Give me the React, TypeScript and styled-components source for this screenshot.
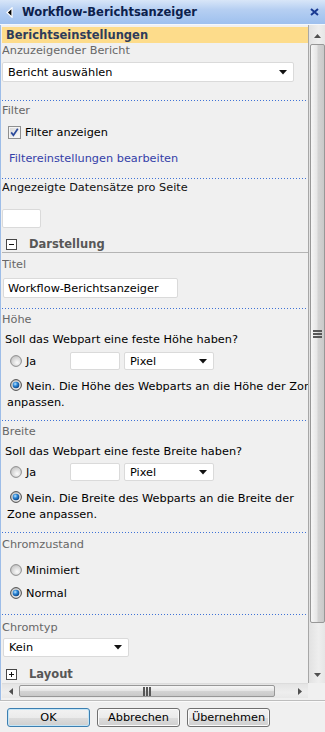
import React from 'react';
import styled, { createGlobalStyle } from 'styled-components';

const GlobalStyle = createGlobalStyle`
  html, body {
    margin: 0;
    padding: 0;
    background: #f0f0f0;
  }
  body {
    font-family: "DejaVu Sans", Verdana, sans-serif;
    font-size: 11.3px;
    color: #000;
  }
`;

const Dialog = styled.div`
  width: 325px;
  height: 732px;
  display: flex;
  flex-direction: column;
  background: #f0f0f0;
  overflow: hidden;
`;

const TitleBar = styled.div`
  flex: none;
  height: 24px;
  display: flex;
  align-items: center;
  gap: 9px;
  padding: 0 6px 0 6px;
  background: linear-gradient(#d8e6f8, #b6cff2 40%, #9ec0ee);
  border-bottom: 1px solid #f4f8fd;
`;

const TitleText = styled.div`
  flex: 1;
  font-weight: bold;
  font-size: 11.5px;
  color: #0c214c;
`;

const Workspace = styled.div`
  flex: none;
  height: 675px;
  display: grid;
  grid-template-columns: 306px 17px;
  grid-template-rows: 658px 15px;
  border-left: 1px solid #9dbde8;
  padding-left: 1px;
`;

const Pane = styled.div`
  grid-column: 1;
  grid-row: 1;
  overflow: hidden;
  padding-top: 2px;
`;

const PaneInner = styled.div`
  width: 340px;
`;

const SectionBar = styled.div`
  height: 16px;
  line-height: 16px;
  padding-left: 4px;
  background: #fddc8b;
  font-weight: bold;
  font-size: 11.5px;
  color: #2e3c5a;
`;

const FieldLabel = styled.div<{ $mt?: number; $dark?: boolean }>`
  margin-top: ${p => p.$mt ?? 0}px;
  line-height: 16px;
  color: ${p => (p.$dark ? '#111' : '#676767')};
`;

const Prompt = styled.div<{ $mt?: number }>`
  margin-top: ${p => p.$mt ?? 0}px;
  line-height: 16px;
  padding-left: 3px;
`;

const Divider = styled.div<{ $mt?: number }>`
  margin-top: ${p => p.$mt ?? 0}px;
  height: 1px;
  background-image: repeating-linear-gradient(90deg, #3f72d6 0 1px, transparent 1px 3px);
`;

const SelectBox = styled.div<{ $w: number; $h: number; $mt?: number; $ml?: number }>`
  flex: none;
  box-sizing: border-box;
  margin-top: ${p => p.$mt ?? 0}px;
  margin-left: ${p => p.$ml ?? 0}px;
  width: ${p => p.$w}px;
  height: ${p => p.$h}px;
  display: flex;
  align-items: center;
  justify-content: space-between;
  padding: 0 6px 0 5px;
  background: #fff;
  border: 1px solid #dadada;
  border-radius: 2px;
`;

const TextBox = styled.div<{ $w: number; $h: number; $mt?: number; $ml?: number }>`
  flex: none;
  box-sizing: border-box;
  margin-top: ${p => p.$mt ?? 0}px;
  margin-left: ${p => p.$ml ?? 0}px;
  width: ${p => p.$w}px;
  height: ${p => p.$h}px;
  display: flex;
  align-items: center;
  padding-left: 4px;
  background: #fff;
  border: 1px solid #dadada;
  border-radius: 2px;
  white-space: nowrap;
`;

const OptionRow = styled.div<{ $mt?: number }>`
  margin-top: ${p => p.$mt ?? 0}px;
  height: 16px;
  display: flex;
  align-items: center;
  gap: 4px;
  padding-left: 8px;
`;

const ChoiceRow = styled(OptionRow)`
  height: 18px;
`;

const CheckRow = styled(OptionRow)`
  padding-left: 6px;
`;

const ChoiceLabel = styled.span<{ $w?: number }>`
  flex: none;
  width: ${p => (p.$w ? `${p.$w}px` : 'auto')};
`;

const WrapOption = styled.div<{ $mt?: number }>`
  margin-top: ${p => p.$mt ?? 0}px;
  padding-left: 5px;
  line-height: 16px;
  white-space: nowrap;
`;

const InlineMark = styled.span`
  display: inline-block;
  line-height: 0;
  vertical-align: -1px;
  margin: 0 4px 0 3px;
  svg {
    display: block;
  }
`;

const LinkText = styled.div<{ $mt?: number }>`
  margin-top: ${p => p.$mt ?? 0}px;
  line-height: 16px;
  padding-left: 7px;
  color: #3440a8;
`;

const GroupHeader = styled.div<{ $mt?: number; $underline?: boolean }>`
  margin-top: ${p => p.$mt ?? 0}px;
  height: 16px;
  display: flex;
  align-items: center;
  gap: 12px;
  padding-left: 4px;
  font-weight: bold;
  font-size: 11.5px;
  color: #575757;
  border-bottom: ${p => (p.$underline ? '1px solid #b4b4b4' : 'none')};
  width: 302px;
`;

const VScroll = styled.div`
  grid-column: 2;
  grid-row: 1;
  display: flex;
  flex-direction: column;
  padding-top: 2px;
  border-left: 1px solid #a7a7a7;
  background: linear-gradient(90deg, #e2e2e2, #eeeeee 60%, #e6e6e6);
`;

const ScrollButton = styled.div<{ $horizontal?: boolean }>`
  flex: none;
  width: ${p => (p.$horizontal ? '17px' : 'auto')};
  height: ${p => (p.$horizontal ? 'auto' : '17px')};
  display: flex;
  align-items: center;
  justify-content: center;
`;

const VThumb = styled.div`
  flex: none;
  height: 579px;
  margin: 0 0 0 1px;
  box-sizing: border-box;
  border: 1px solid #979797;
  border-radius: 2px;
  background: linear-gradient(90deg, #f6f6f6, #e6e6e6 45%, #d3d3d3 55%, #c9c9c9);
  display: flex;
  align-items: center;
  justify-content: center;
`;

const Track = styled.div`
  flex: 1;
`;

const HScroll = styled.div`
  grid-column: 1;
  grid-row: 2;
  display: flex;
  background: linear-gradient(#e4e4e4, #eeeeee 60%, #e8e8e8);
  border-top: 1px solid #dcdcdc;
`;

const HThumb = styled.div`
  flex: none;
  width: 256px;
  margin: 1px 0;
  box-sizing: border-box;
  border: 1px solid #979797;
  border-radius: 2px;
  background: linear-gradient(#f6f6f6, #e6e6e6 45%, #d3d3d3 55%, #c9c9c9);
  display: flex;
  align-items: center;
  justify-content: center;
`;

const Corner = styled.div`
  grid-column: 2;
  grid-row: 2;
  background: #f0f0f0;
`;

const Footer = styled.div`
  flex: 1;
  display: flex;
  gap: 7px;
  padding: 7px 0 0 7px;
  border-top: 1px solid #bdbdbd;
  box-shadow: inset 0 1px #fafafa;
`;

const DialogButton = styled.button<{ $focused?: boolean }>`
  flex: none;
  width: 83px;
  height: 19px;
  padding: 0;
  font-family: "DejaVu Sans", Verdana, sans-serif;
  font-size: 11.3px;
  color: #000;
  border: 1px solid ${p => (p.$focused ? '#3c7fb1' : '#707070')};
  border-radius: 3px;
  background: linear-gradient(#f2f2f2, #ebebeb 50%, #dddddd 51%, #cfcfcf);
  box-shadow: ${p => (p.$focused ? 'inset 0 0 0 1px #c4e5f6' : 'inset 0 0 0 1px #fbfbfb')};
`;

const Caret = () => (
  <svg width="8" height="5" viewBox="0 0 8 5">
    <polygon points="0,0 8,0 4,4.5" fill="#111" />
  </svg>
);

const Radio = ({ on }: { on?: boolean }) => (
  <svg width="12" height="12" viewBox="0 0 12 12" style={{ flex: 'none' }}>
    <defs>
      <radialGradient id="radOff" cx="0.6" cy="0.65" r="0.6">
        <stop offset="0" stopColor="#fbfbfb" />
        <stop offset="1" stopColor="#c9c9c9" />
      </radialGradient>
      <radialGradient id="radOn" cx="0.38" cy="0.35" r="0.7">
        <stop offset="0" stopColor="#bfe6ff" />
        <stop offset="0.45" stopColor="#2b86d6" />
        <stop offset="1" stopColor="#0a3e7c" />
      </radialGradient>
    </defs>
    <circle cx="6" cy="6" r="5.4" fill="url(#radOff)" stroke={on ? '#4a4a4a' : '#8d8d8d'} strokeWidth="1" />
    {on && <circle cx="6" cy="6" r="3.3" fill="url(#radOn)" />}
  </svg>
);

const CheckBox = () => (
  <svg width="13" height="13" viewBox="0 0 13 13" style={{ flex: 'none' }}>
    <defs>
      <linearGradient id="chkFill" x1="0" y1="0" x2="1" y2="1">
        <stop offset="0" stopColor="#d8d8d8" />
        <stop offset="1" stopColor="#fbfbfb" />
      </linearGradient>
    </defs>
    <rect x="0.5" y="0.5" width="12" height="12" fill="#f4f4f4" stroke="#8e8f8f" />
    <rect x="2" y="2" width="9" height="9" fill="url(#chkFill)" />
    <path d="M3.2 6.4 L5.4 9.2 L9.8 2.8" fill="none" stroke="#2b4a9b" strokeWidth="1.7" />
  </svg>
);

const ToggleBox = ({ open }: { open?: boolean }) => (
  <svg width="11" height="11" viewBox="0 0 11 11" style={{ flex: 'none' }}>
    <rect x="0.5" y="0.5" width="10" height="10" fill="#fff" stroke="#474747" />
    <line x1="3" y1="5.5" x2="8" y2="5.5" stroke="#111" />
    {!open && <line x1="5.5" y1="3" x2="5.5" y2="8" stroke="#111" />}
  </svg>
);

const Arrow = ({ dir }: { dir: 'up' | 'down' | 'left' | 'right' }) => {
  const pts = {
    up: '0,4 7,4 3.5,0',
    down: '0,0 7,0 3.5,4',
    left: '4,0 4,7 0,3.5',
    right: '0,0 0,7 4,3.5',
  }[dir];
  const vertical = dir === 'up' || dir === 'down';
  return (
    <svg width={vertical ? 7 : 4} height={vertical ? 4 : 7} viewBox={vertical ? '0 0 7 4' : '0 0 4 7'}>
      <polygon points={pts} fill="#505050" />
    </svg>
  );
};

const Grip = ({ horizontal }: { horizontal?: boolean }) => (
  <svg width={horizontal ? 8 : 9} height={horizontal ? 9 : 8} viewBox={horizontal ? '0 0 8 9' : '0 0 9 8'}>
    {[0, 3, 6].map(o =>
      horizontal ? (
        <rect key={o} x={o} y="0" width="2" height="9" fill="#575757" />
      ) : (
        <rect key={o} x="0" y={o} width="9" height="2" fill="#575757" />
      )
    )}
  </svg>
);

const App: React.FC = () => {
  return (
    <Dialog>
      <GlobalStyle />
      <TitleBar>
        <svg width="7" height="11" viewBox="0 0 7 11">
          <polygon points="6,0.8 6,10.2 1,5.5" fill="#000" stroke="#fff" strokeWidth="1.2" />
        </svg>
        <TitleText>Workflow-Berichtsanzeiger</TitleText>
        <svg width="9" height="8" viewBox="0 0 9 8">
          <path d="M1 1 L8 7 M8 1 L1 7" stroke="#1a3a92" strokeWidth="2" />
        </svg>
      </TitleBar>

      <Workspace>
        <Pane>
          <PaneInner>
            <SectionBar>Berichtseinstellungen</SectionBar>
            <FieldLabel>Anzuzeigender Bericht</FieldLabel>
            <SelectBox $w={292} $h={20} $mt={3}>
              Bericht auswählen
              <Caret />
            </SelectBox>

            <Divider $mt={18} />
            <FieldLabel $mt={2}>Filter</FieldLabel>
            <CheckRow $mt={5}>
              <CheckBox />
              <span>Filter anzeigen</span>
            </CheckRow>
            <LinkText $mt={11}>Filtereinstellungen bearbeiten</LinkText>

            <Divider $mt={11} />
            <FieldLabel $mt={1} $dark>Angezeigte Datensätze pro Seite</FieldLabel>
            <TextBox $w={39} $h={19} $mt={13} />

            <GroupHeader $mt={8} $underline>
              <ToggleBox open />
              Darstellung
            </GroupHeader>
            <FieldLabel $mt={4}>Titel</FieldLabel>
            <TextBox $w={175} $h={20} $mt={5} $ml={1}>Workflow-Berichtsanzeiger</TextBox>

            <Divider $mt={10} />
            <FieldLabel $mt={3}>Höhe</FieldLabel>
            <Prompt $mt={4}>Soll das Webpart eine feste Höhe haben?</Prompt>
            <ChoiceRow $mt={4}>
              <Radio />
              <ChoiceLabel $w={40}>Ja</ChoiceLabel>
              <TextBox $w={50} $h={18} />
              <SelectBox $w={90} $h={18}>
                Pixel
                <Caret />
              </SelectBox>
            </ChoiceRow>
            <WrapOption $mt={9}>
              <InlineMark>
                <Radio on />
              </InlineMark>
              Nein. Die Höhe des Webparts an die Höhe der Zone
              <br />
              anpassen.
            </WrapOption>

            <Divider $mt={9} />
            <FieldLabel $mt={3}>Breite</FieldLabel>
            <Prompt $mt={4}>Soll das Webpart eine feste Breite haben?</Prompt>
            <ChoiceRow $mt={3}>
              <Radio />
              <ChoiceLabel $w={40}>Ja</ChoiceLabel>
              <TextBox $w={50} $h={18} />
              <SelectBox $w={90} $h={18}>
                Pixel
                <Caret />
              </SelectBox>
            </ChoiceRow>
            <WrapOption $mt={10}>
              <InlineMark>
                <Radio on />
              </InlineMark>
              Nein. Die Breite des Webparts an die Breite der
              <br />
              Zone anpassen.
            </WrapOption>

            <Divider $mt={9} />
            <FieldLabel $mt={4}>Chromzustand</FieldLabel>
            <OptionRow $mt={9}>
              <Radio />
              <span>Minimiert</span>
            </OptionRow>
            <OptionRow $mt={7}>
              <Radio on />
              <span>Normal</span>
            </OptionRow>

            <Divider $mt={13} />
            <FieldLabel $mt={5}>Chromtyp</FieldLabel>
            <SelectBox $w={126} $h={19} $mt={2} $ml={1}>
              Kein
              <Caret />
            </SelectBox>

            <GroupHeader $mt={9}>
              <ToggleBox />
              Layout
            </GroupHeader>
          </PaneInner>
        </Pane>

        <VScroll>
          <ScrollButton>
            <Arrow dir="up" />
          </ScrollButton>
          <VThumb>
            <Grip />
          </VThumb>
          <Track />
          <ScrollButton>
            <Arrow dir="down" />
          </ScrollButton>
        </VScroll>

        <HScroll>
          <ScrollButton $horizontal>
            <Arrow dir="left" />
          </ScrollButton>
          <HThumb>
            <Grip horizontal />
          </HThumb>
          <Track />
          <ScrollButton $horizontal>
            <Arrow dir="right" />
          </ScrollButton>
        </HScroll>
        <Corner />
      </Workspace>

      <Footer>
        <DialogButton $focused>OK</DialogButton>
        <DialogButton>Abbrechen</DialogButton>
        <DialogButton>Übernehmen</DialogButton>
      </Footer>
    </Dialog>
  );
};

export default App;
